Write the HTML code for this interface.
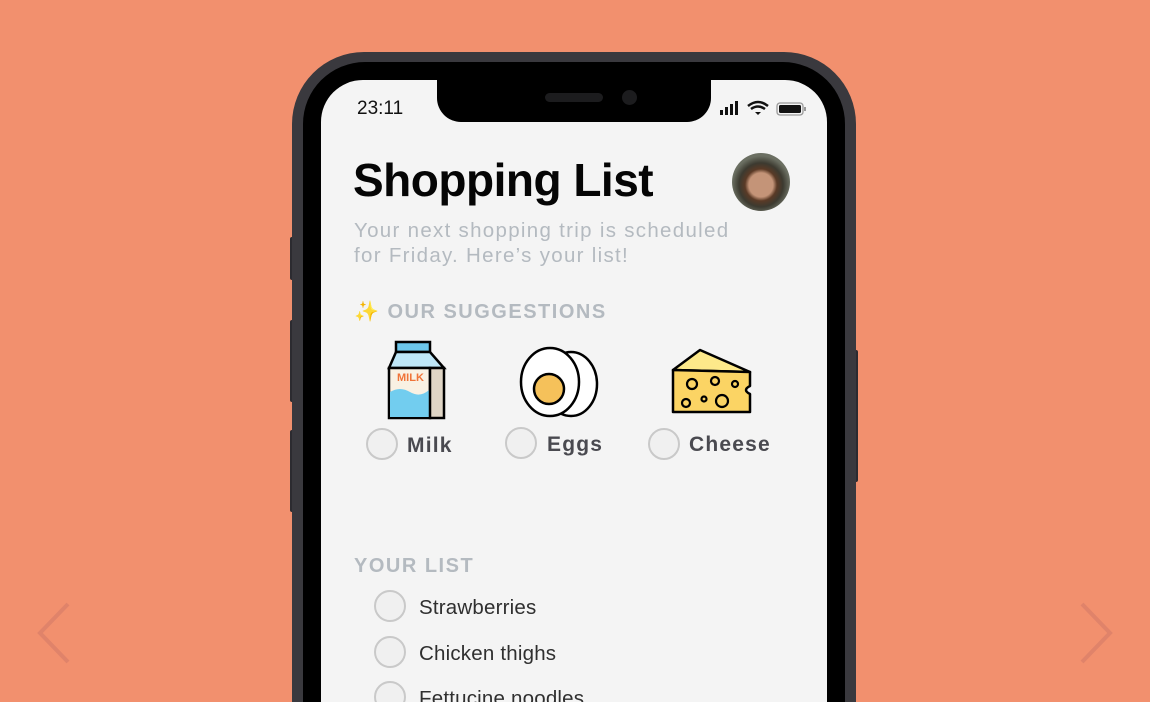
<!DOCTYPE html>
<html style="width:1150px;height:702px;overflow:hidden"><head><meta charset="utf-8"><style>
*{margin:0;padding:0;box-sizing:border-box}
body{width:1150px;height:702px;background:#f2906e;position:relative;overflow:hidden;font-family:"Liberation Sans",sans-serif}
.abs{position:absolute}
.frame{left:292px;top:52px;width:564px;height:760px;background:#3a393e;border-radius:72px}
.bezel{left:303px;top:62px;width:542px;height:750px;background:#000;border-radius:62px}
.screen{left:321px;top:80px;width:506px;height:730px;background:#f4f4f4;border-radius:42px;overflow:hidden}
.notch{left:437px;top:70px;width:274px;height:52px;background:#000;border-radius:0 0 24px 24px}
.btn{background:#2c2b30;width:4px;border-radius:2px}
.circ{width:32px;height:32px;border:2.5px solid #c9c9c9;border-radius:50%;background:#f0f0f0;position:absolute}
.lbl{font-weight:bold;font-size:21px;color:#4a4a50;letter-spacing:1.2px;position:absolute}
.item{font-size:20.5px;color:#2f2f2f;position:absolute;left:419px;letter-spacing:0.2px}
.hdr{font-weight:bold;font-size:20px;color:#b4bac0;letter-spacing:1.5px;position:absolute}
</style></head><body>
<svg class="abs" style="left:34px;top:600px" width="40" height="66"><path d="M34 4 L6 33 L34 62" fill="none" stroke="#e0836a" stroke-width="4"/></svg>
<svg class="abs" style="left:1076px;top:600px" width="40" height="66"><path d="M6 4 L34 33 L6 62" fill="none" stroke="#e0836a" stroke-width="4"/></svg>
<div class="abs btn" style="left:290px;top:237px;height:43px"></div>
<div class="abs btn" style="left:290px;top:320px;height:82px"></div>
<div class="abs btn" style="left:290px;top:430px;height:82px"></div>
<div class="abs btn" style="left:854px;top:350px;height:132px"></div>
<div class="abs frame"></div>
<div class="abs bezel"></div>
<div class="abs screen"></div>
<div class="abs notch"></div>
<div class="abs" style="left:545px;top:93px;width:58px;height:9px;border-radius:5px;background:#1c1c1e"></div>
<div class="abs" style="left:622px;top:90px;width:15px;height:15px;border-radius:50%;background:#1c1c1e"></div>
<div class="abs" style="left:357px;top:98px;font-size:19px;color:#111">23:11</div>
<svg class="abs" style="left:720px;top:100px" width="90" height="18">
<rect x="0" y="10" width="3" height="5" fill="#111"/><rect x="5" y="7" width="3" height="8" fill="#111"/><rect x="10" y="4" width="3" height="11" fill="#111"/><rect x="15" y="1" width="3" height="14" fill="#111"/>
<path d="M28 6 Q38 -2 48 6" fill="none" stroke="#111" stroke-width="2.5"/><path d="M31 9 Q38 4 45 9" fill="none" stroke="#111" stroke-width="2.5"/><path d="M35 12 L38 15 L41 12 Z" fill="#111"/>
<rect x="57" y="3" width="26" height="12" rx="3" fill="none" stroke="#999" stroke-width="1.3"/><rect x="59" y="5" width="22" height="8" rx="1.5" fill="#111"/><rect x="84" y="7" width="2" height="4" fill="#999"/>
</svg>
<div class="abs" style="left:353px;top:153px;font-size:46px;font-weight:bold;color:#050505;letter-spacing:-0.5px">Shopping List</div>
<div class="abs" style="left:732px;top:153px;width:58px;height:58px;border-radius:50%;overflow:hidden;background:radial-gradient(circle at 50% 55%,#c49478 0 12px,#5a3a26 16px,#3c3a30 22px,#6b6f62 29px)"></div>
<div class="abs" style="left:354px;top:218px;font-size:20.5px;line-height:25px;color:#b4bac0;letter-spacing:1.3px">Your next shopping trip is scheduled<br>for Friday. Here’s your list!</div>
<div class="hdr" style="left:354px;top:299px"><span style="color:#f6c945">✨</span> OUR SUGGESTIONS</div>
<svg class="abs" style="left:386px;top:340px" width="64" height="82">
<rect x="10" y="2" width="34" height="10" fill="#6cc6ea" stroke="#000" stroke-width="2.5"/>
<path d="M3 28 L10 12 L44 12 L58 28 Z" fill="#bfe7f7" stroke="#000" stroke-width="2.5"/>
<rect x="3" y="28" width="41" height="50" fill="#f9f1e3" stroke="#000" stroke-width="2.5"/>
<path d="M4 52 Q14 46 24 52 Q34 58 43 50 L43 77 L4 77 Z" fill="#72cdef"/>
<rect x="44" y="28" width="14" height="50" fill="#e0d6c6" stroke="#000" stroke-width="2.5"/>
<text x="11" y="41" font-size="11" font-weight="bold" fill="#f07438" font-family="Liberation Sans">MILK</text>
</svg>
<svg class="abs" style="left:517px;top:342px" width="84" height="76">
<ellipse cx="54" cy="42" rx="26" ry="32" fill="#fff" stroke="#000" stroke-width="2.5"/>
<ellipse cx="33" cy="40" rx="29" ry="34" fill="#fff" stroke="#000" stroke-width="2.5"/>
<circle cx="32" cy="47" r="15" fill="#f5c15a" stroke="#000" stroke-width="2.5"/>
</svg>
<svg class="abs" style="left:670px;top:346px" width="84" height="72">
<path d="M3 24 L30 4 L80 26 Z" fill="#fde98a" stroke="#000" stroke-width="2.5" stroke-linejoin="round"/>
<path d="M3 24 L80 26 L80 40 Q72 44 80 48 L80 66 L3 66 Z" fill="#fbd464" stroke="#000" stroke-width="2.5" stroke-linejoin="round"/>
<g fill="none" stroke="#000" stroke-width="2.2"><circle cx="22" cy="38" r="5"/><circle cx="45" cy="35" r="4"/><circle cx="65" cy="38" r="3"/><circle cx="16" cy="57" r="4"/><circle cx="34" cy="53" r="2.5"/><circle cx="52" cy="55" r="6"/></g>
</svg>
<div class="circ" style="left:366px;top:428px"></div><div class="lbl" style="left:407px;top:434px">Milk</div>
<div class="circ" style="left:505px;top:427px"></div><div class="lbl" style="left:547px;top:433px">Eggs</div>
<div class="circ" style="left:648px;top:428px"></div><div class="lbl" style="left:689px;top:433px">Cheese</div>
<div class="hdr" style="left:354px;top:555px">YOUR LIST</div>
<div class="circ" style="left:374px;top:590px"></div><div class="item" style="top:596px">Strawberries</div>
<div class="circ" style="left:374px;top:636px"></div><div class="item" style="top:642px">Chicken thighs</div>
<div class="circ" style="left:374px;top:681px"></div><div class="item" style="top:687px">Fettucine noodles</div>
</body></html>
